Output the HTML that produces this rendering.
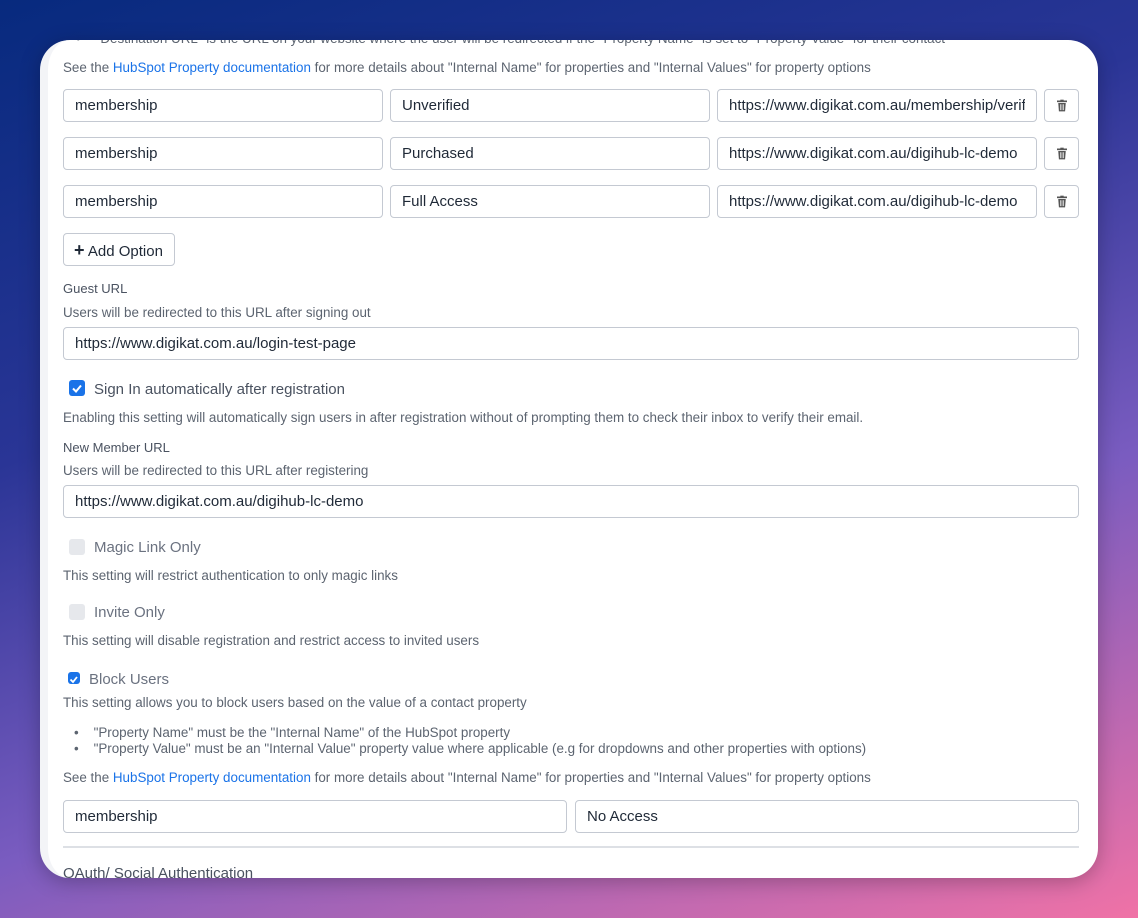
<!DOCTYPE html>
<html><head><style>
*{box-sizing:border-box;margin:0;padding:0}
body{width:1138px;height:918px;overflow:hidden;font-family:"Liberation Sans",sans-serif;position:relative;
background:linear-gradient(160deg,#072a7e 0%,#2a3596 35%,#7a5cc0 65%,#f072a6 100%);}
.card{position:absolute;left:40px;top:40px;width:1058px;height:838px;background:#fff;border-radius:30px;overflow:hidden;border-left:8px solid #f3f4f7;box-shadow:0 4px 20px rgba(0,0,0,.25)}
.a{position:absolute}
.t{font-size:13.4px;color:#5c6470;white-space:nowrap}
.lbl{font-size:13px;color:#4a5260;white-space:nowrap}
.in{position:absolute;height:33px;border:1px solid #c4c9d2;border-radius:4px;font-size:15px;color:#1f2937;padding:0 11px;line-height:32px;white-space:nowrap;overflow:hidden;background:#fff}
.in span.clip{display:block;overflow:hidden}
.del{position:absolute;width:35px;height:33px;border:1px solid #c4c9d2;border-radius:4px;display:flex;align-items:center;justify-content:center}
a{color:#1a73e8;text-decoration:none}
.cb{position:absolute;width:16px;height:16px;border-radius:3px}
.on{background:#1a73e8}
.off{background:#e6e8ec}
.ck{font-size:15px;color:#4a5260;white-space:nowrap}
.dis{color:#6b7280}
</style></head><body>
<div class="card">
<div class="a t" style="left:28px;top:-9px;">•&nbsp;&nbsp;&nbsp;&nbsp;"Destination URL" is the URL on your website where the user will be redirected if the "Property Name" is set to "Property Value" for their contact</div>
<div class="a t" style="left:15px;top:20px;">See the <a>HubSpot Property documentation</a> for more details about "Internal Name" for properties and "Internal Values" for property options</div>

<div class="in" style="left:15px;top:49px;width:320px">membership</div>
<div class="in" style="left:342px;top:49px;width:320px">Unverified</div>
<div class="in" style="left:669px;top:49px;width:320px"><span class="clip">https://www.digikat.com.au/membership/verify</span></div>
<div class="del" style="left:996px;top:49px"><svg width="10" height="13" viewBox="0 0 12 14"><rect x="0" y="1" width="12" height="2" fill="#555"/><rect x="4" y="0" width="4" height="1.5" fill="#555"/><path d="M1.5 4h9l-.8 10H2.3z" fill="#555"/><path d="M4 5.5v7M6 5.5v7M8 5.5v7" stroke="#fff" stroke-width=".8"/></svg></div>

<div class="in" style="left:15px;top:97px;width:320px">membership</div>
<div class="in" style="left:342px;top:97px;width:320px">Purchased</div>
<div class="in" style="left:669px;top:97px;width:320px">https://www.digikat.com.au/digihub-lc-demo</div>
<div class="del" style="left:996px;top:97px"><svg width="10" height="13" viewBox="0 0 12 14"><rect x="0" y="1" width="12" height="2" fill="#555"/><rect x="4" y="0" width="4" height="1.5" fill="#555"/><path d="M1.5 4h9l-.8 10H2.3z" fill="#555"/><path d="M4 5.5v7M6 5.5v7M8 5.5v7" stroke="#fff" stroke-width=".8"/></svg></div>

<div class="in" style="left:15px;top:145px;width:320px">membership</div>
<div class="in" style="left:342px;top:145px;width:320px">Full Access</div>
<div class="in" style="left:669px;top:145px;width:320px">https://www.digikat.com.au/digihub-lc-demo</div>
<div class="del" style="left:996px;top:145px"><svg width="10" height="13" viewBox="0 0 12 14"><rect x="0" y="1" width="12" height="2" fill="#555"/><rect x="4" y="0" width="4" height="1.5" fill="#555"/><path d="M1.5 4h9l-.8 10H2.3z" fill="#555"/><path d="M4 5.5v7M6 5.5v7M8 5.5v7" stroke="#fff" stroke-width=".8"/></svg></div>

<div class="in" style="left:15px;top:193px;width:112px;padding:0 10px"><span style="font-size:18px;font-weight:bold">+</span> Add Option</div>

<div class="a lbl" style="left:15px;top:241px">Guest URL</div>
<div class="a t" style="left:15px;top:265px">Users will be redirected to this URL after signing out</div>
<div class="in" style="left:15px;top:287px;width:1016px">https://www.digikat.com.au/login-test-page</div>

<div class="cb on" style="left:21px;top:340px"><svg width="16" height="16"><path d="M4 8.5l3 3 5-6" stroke="#fff" stroke-width="2" fill="none"/></svg></div>
<div class="a ck" style="left:46px;top:341px">Sign In automatically after registration</div>
<div class="a t" style="left:15px;top:370px">Enabling this setting will automatically sign users in after registration without of prompting them to check their inbox to verify their email.</div>

<div class="a lbl" style="left:15px;top:400px">New Member URL</div>
<div class="a t" style="left:15px;top:423px">Users will be redirected to this URL after registering</div>
<div class="in" style="left:15px;top:445px;width:1016px">https://www.digikat.com.au/digihub-lc-demo</div>

<div class="cb off" style="left:21px;top:499px"></div>
<div class="a ck dis" style="left:46px;top:499px">Magic Link Only</div>
<div class="a t" style="left:15px;top:528px">This setting will restrict authentication to only magic links</div>

<div class="cb off" style="left:21px;top:564px"></div>
<div class="a ck dis" style="left:46px;top:564px">Invite Only</div>
<div class="a t" style="left:15px;top:593px">This setting will disable registration and restrict access to invited users</div>

<div class="cb on" style="left:20px;top:632px;width:12px;height:12px"><svg width="12" height="12"><path d="M2.5 6.5l2.5 2.5 4-5" stroke="#fff" stroke-width="1.8" fill="none"/></svg></div>
<div class="a ck dis" style="left:41px;top:631px">Block Users</div>
<div class="a t" style="left:15px;top:655px">This setting allows you to block users based on the value of a contact property</div>
<div class="a t" style="left:26px;top:685px">•&nbsp;&nbsp;&nbsp;&nbsp;"Property Name" must be the "Internal Name" of the HubSpot property</div>
<div class="a t" style="left:26px;top:701px">•&nbsp;&nbsp;&nbsp;&nbsp;"Property Value" must be an "Internal Value" property value where applicable (e.g for dropdowns and other properties with options)</div>
<div class="a t" style="left:15px;top:730px">See the <a>HubSpot Property documentation</a> for more details about "Internal Name" for properties and "Internal Values" for property options</div>

<div class="in" style="left:15px;top:760px;width:504px">membership</div>
<div class="in" style="left:527px;top:760px;width:504px">No Access</div>

<div class="a" style="left:15px;top:806px;width:1016px;height:2px;background:#dde0e5"></div>
<div class="a ck" style="left:15px;top:825px;color:#4a5260">OAuth/ Social Authentication</div>
</div>
</body></html>
